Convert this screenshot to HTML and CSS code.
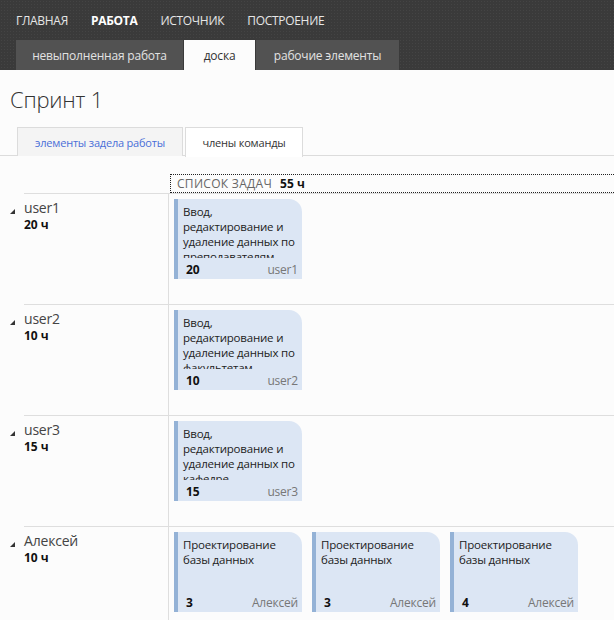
FILE: index.html
```html
<!DOCTYPE html>
<html lang="ru">
<head>
<meta charset="utf-8">
<title>Спринт 1</title>
<link rel="stylesheet" href="styles.css">
</head>
<body>
<header class="header">
  <nav class="topnav">
    <a class="topnav-item">ГЛАВНАЯ</a>
    <a class="topnav-item active">РАБОТА</a>
    <a class="topnav-item">ИСТОЧНИК</a>
    <a class="topnav-item">ПОСТРОЕНИЕ</a>
  </nav>
  <nav class="subnav">
    <a class="subnav-tab tab-backlog">невыполненная работа</a>
    <a class="subnav-tab tab-board active">доска</a>
    <a class="subnav-tab tab-items">рабочие элементы</a>
  </nav>
</header>

<h1 class="page-title">Спринт 1</h1>

<div class="tabs">
  <a class="tab tab-left">элементы задела работы</a>
  <a class="tab tab-right active">члены команды</a>
</div>

<section class="board">
  <div class="board-head">
    <div class="head-spacer"></div>
    <div class="head-cell"><span class="head-label">СПИСОК ЗАДАЧ</span><span class="head-total">55 ч</span></div>
  </div>

  <div class="row">
    <div class="lane">
      <svg class="tri" width="5" height="5" viewBox="0 0 5 5"><polygon points="5,0 5,5 0,5" fill="#333"/></svg>
      <div class="lane-info"><div class="lane-name">user1</div><div class="lane-hours">20 ч</div></div>
    </div>
    <div class="cards">
      <div class="card">
        <div class="card-title">Ввод, редактирование и удаление данных по преподавателям</div>
        <div class="card-foot"><span class="card-num">20</span><span class="card-who">user1</span></div>
      </div>
    </div>
  </div>

  <div class="row">
    <div class="lane">
      <svg class="tri" width="5" height="5" viewBox="0 0 5 5"><polygon points="5,0 5,5 0,5" fill="#333"/></svg>
      <div class="lane-info"><div class="lane-name">user2</div><div class="lane-hours">10 ч</div></div>
    </div>
    <div class="cards">
      <div class="card">
        <div class="card-title">Ввод, редактирование и удаление данных по факультетам</div>
        <div class="card-foot"><span class="card-num">10</span><span class="card-who">user2</span></div>
      </div>
    </div>
  </div>

  <div class="row">
    <div class="lane">
      <svg class="tri" width="5" height="5" viewBox="0 0 5 5"><polygon points="5,0 5,5 0,5" fill="#333"/></svg>
      <div class="lane-info"><div class="lane-name">user3</div><div class="lane-hours">15 ч</div></div>
    </div>
    <div class="cards">
      <div class="card">
        <div class="card-title">Ввод, редактирование и удаление данных по кафедре</div>
        <div class="card-foot"><span class="card-num">15</span><span class="card-who">user3</span></div>
      </div>
    </div>
  </div>

  <div class="row last">
    <div class="lane">
      <svg class="tri" width="5" height="5" viewBox="0 0 5 5"><polygon points="5,0 5,5 0,5" fill="#333"/></svg>
      <div class="lane-info"><div class="lane-name">Алексей</div><div class="lane-hours">10 ч</div></div>
    </div>
    <div class="cards">
      <div class="card">
        <div class="card-title">Проектирование базы данных</div>
        <div class="card-foot"><span class="card-num">3</span><span class="card-who">Алексей</span></div>
      </div>
      <div class="card">
        <div class="card-title">Проектирование базы данных</div>
        <div class="card-foot"><span class="card-num">3</span><span class="card-who">Алексей</span></div>
      </div>
      <div class="card">
        <div class="card-title">Проектирование базы данных</div>
        <div class="card-foot"><span class="card-num">4</span><span class="card-who">Алексей</span></div>
      </div>
    </div>
  </div>
</section>
</body>
</html>
```

FILE: styles.css
```css
* { box-sizing: border-box; }

html, body {
  margin: 0;
  padding: 0;
  background: #fcfcfc;
  font-family: "Open Sans", "Noto Sans", "Liberation Sans", sans-serif;
  color: #222;
  overflow: hidden;
}

a { text-decoration: none; cursor: pointer; }

.header {
  background-color: #3a3a3a;
  background-image: radial-gradient(circle, #444 0.8px, transparent 1px);
  background-size: 3px 3px;
}

.topnav {
  height: 40px;
  display: flex;
  align-items: center;
  padding-left: 16px;
  gap: 23px;
}

.topnav-item {
  color: #e6e6e6;
  font-size: 12px;
  letter-spacing: -0.3px;
}

.topnav-item.active {
  color: #fff;
  font-weight: 700;
}

.subnav {
  height: 30px;
  display: flex;
  padding-left: 16px;
  gap: 1px;
}

.subnav-tab {
  display: flex;
  align-items: center;
  justify-content: center;
  background: #525252;
  color: #e2e2e2;
  font-size: 12px;
  letter-spacing: -0.2px;
}

.tab-backlog { width: 167px; }
.tab-board { width: 71px; }
.tab-items { width: 143px; }

.subnav-tab.active {
  background: #fcfcfc;
  color: #333;
}

.page-title {
  margin: 0;
  padding: 14px 0 0 10px;
  height: 57px;
  font-size: 22px;
  font-weight: 300;
  color: #333;
  line-height: 30px;
  letter-spacing: -0.2px;
}

.tabs {
  display: flex;
  padding-left: 17px;
  gap: 2px;
  border-bottom: 1px solid #dcdcdc;
  height: 29px;
}

.tab {
  height: 29px;
  display: flex;
  align-items: center;
  justify-content: center;
  font-size: 11px;
  border: 1px solid #dcdcdc;
  border-bottom: none;
  letter-spacing: -0.2px;
}

.tab-left {
  width: 166px;
  background: #f4f4f4;
  color: #4a6fd8;
}

.tab-right {
  width: 118px;
  background: #fff;
  color: #333;
  height: 30px;
  margin-bottom: -1px;
}

.board {
  margin-top: 18px;
}

.board-head {
  display: flex;
  height: 19px;
}

.head-spacer {
  width: 170px;
  flex: none;
}

.head-cell {
  flex: 1;
  border: 1px dotted #222;
  border-right: none;
  display: flex;
  align-items: center;
  padding-left: 6px;
  font-size: 12px;
  gap: 8px;
}

.head-label {
  color: #666;
  letter-spacing: 0.3px;
}

.head-total {
  font-weight: 700;
  color: #111;
}

.row {
  display: flex;
  margin-left: 24px;
  border-top: 1px solid #dedede;
  height: 111px;
}

.row.last { height: 120px; }

.lane {
  flex: none;
  width: 169px;
  margin-left: -24px;
  border-right: 1px solid #dedede;
  display: flex;
  align-items: flex-start;
  padding: 4px 0 0 10px;
}

.tri {
  margin-top: 11px;
  margin-right: 9px;
  flex: none;
}

.lane-name {
  font-size: 14px;
  color: #444;
  line-height: 19px;
  letter-spacing: -0.2px;
}

.lane-hours {
  font-size: 12px;
  font-weight: 700;
  color: #111;
  line-height: 16px;
}

.cards {
  display: flex;
  gap: 10px;
  padding: 5px 0 0 5px;
}

.card {
  width: 128px;
  height: 80px;
  background: #dce6f4;
  border-left: 4px solid #94b2d6;
  border-top-right-radius: 13px;
  display: flex;
  flex-direction: column;
  justify-content: space-between;
}

.card-title {
  font-size: 11.5px;
  line-height: 15px;
  color: #222;
  padding: 5px 6px 0 5px;
  height: 59px;
  overflow: hidden;
  letter-spacing: -0.2px;
  flex: none;
}

.card-foot {
  display: flex;
  justify-content: space-between;
  align-items: baseline;
  padding: 0 4px 2px 8px;
  font-size: 12px;
  line-height: 15px;
}

.card-num {
  font-weight: 700;
  color: #111;
}

.card-who {
  color: #777;
  letter-spacing: -0.2px;
}
```
